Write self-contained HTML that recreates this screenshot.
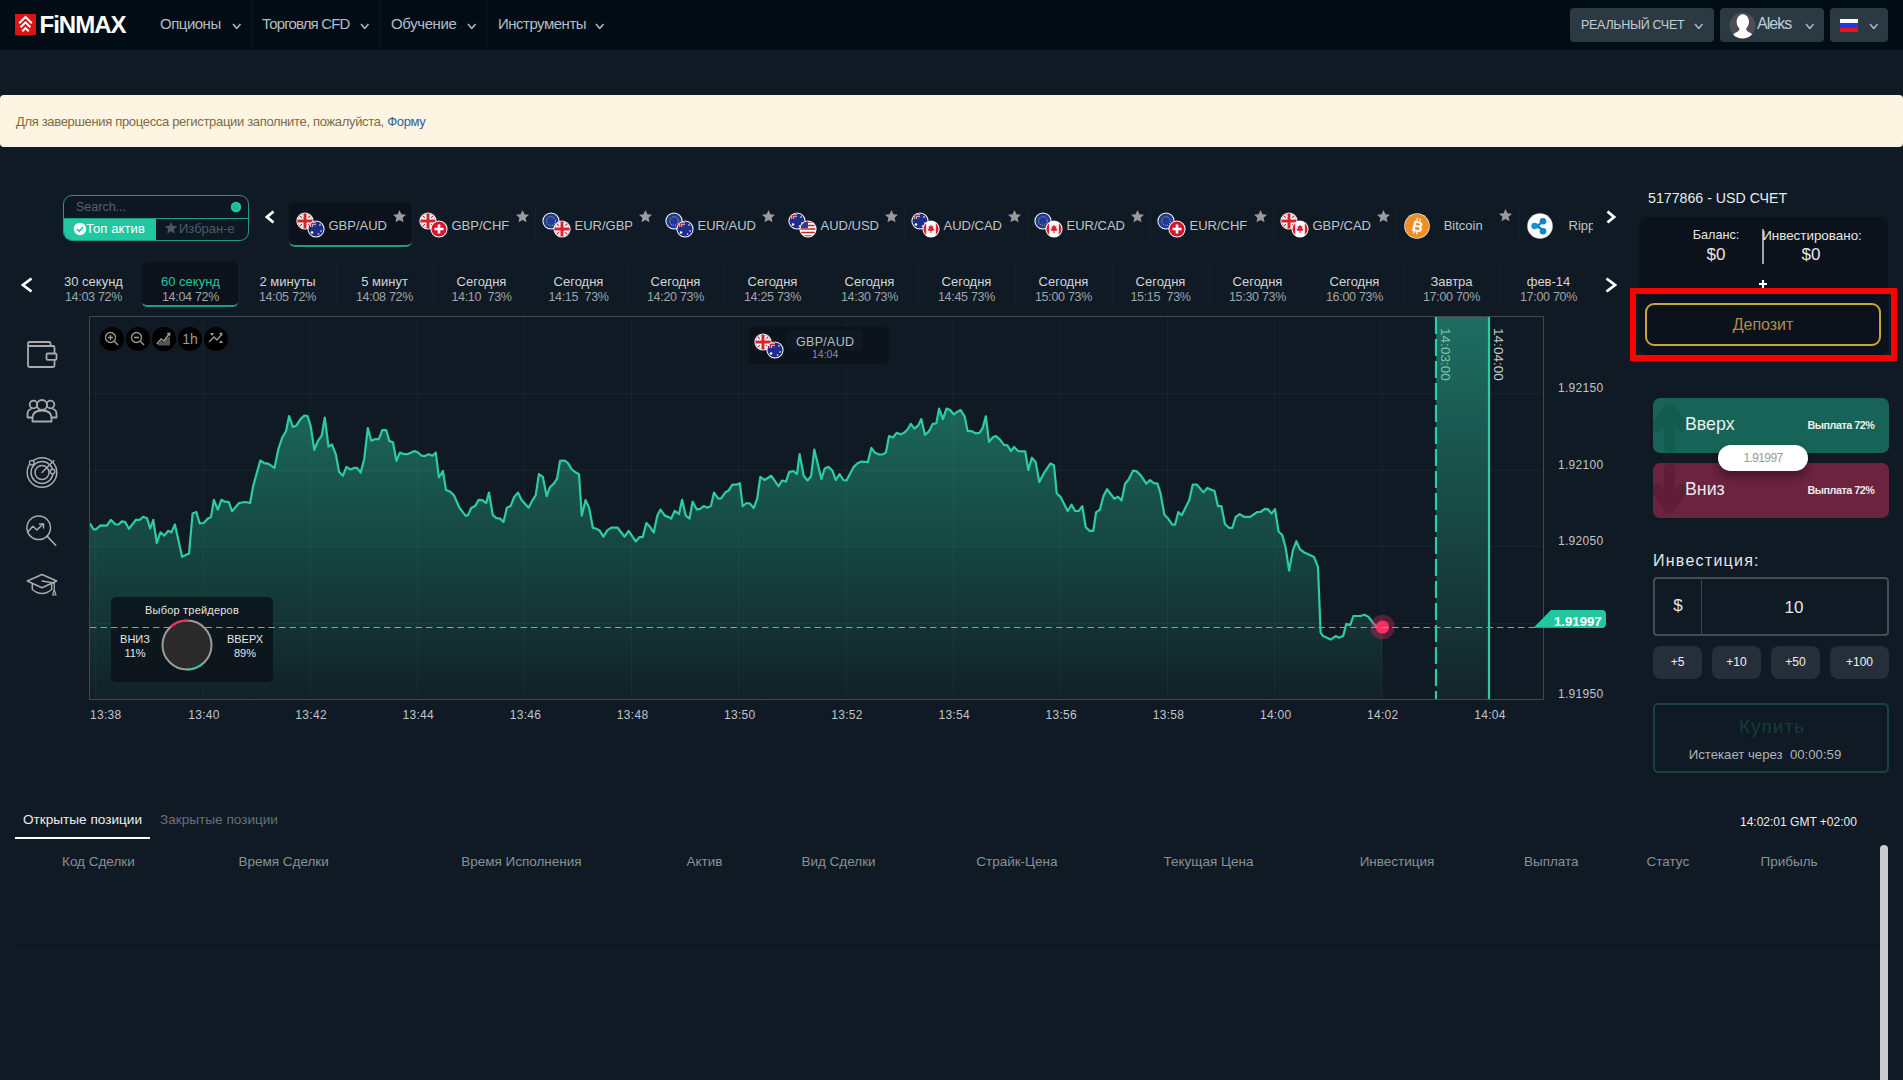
<!DOCTYPE html><html><head><meta charset="utf-8"><style>*{box-sizing:border-box}body{margin:0;width:1903px;height:1080px;background:#0f1a24;overflow:hidden;position:relative;font-family:'Liberation Sans', sans-serif}div{line-height:1.15}</style></head><body><div id="hdr" style="position:absolute;left:0;top:0;width:1903px;height:50px;background:#010c14"></div>
<svg style="position:absolute;left:15px;top:14px" width="21" height="21" viewBox="0 0 21 21"><rect width="21" height="21" fill="#dd1414"/>
<path d="M4.2,9.2 L10.5,3 L16.8,9.2" fill="none" stroke="#fff" stroke-width="2"/>
<path d="M5.6,13.2 L10.5,8.3 L15.4,13.2" fill="none" stroke="#fff" stroke-width="2"/>
<path d="M7.3,17.2 L10.5,14 L13.7,17.2" fill="none" stroke="#fff" stroke-width="2"/></svg>
<div style="position:absolute;left:39.5px;top:11px;font:bold 24px 'Liberation Sans', sans-serif;color:#fff;letter-spacing:-1px">FiNMAX</div>
<div style="position:absolute;left:160px;top:15px;font:15px 'Liberation Sans', sans-serif;color:#b3bec5;white-space:nowrap;letter-spacing:-0.5px">Опционы</div>
<svg style="position:absolute;left:232px;top:22.5px" width="9.5" height="6.5"><path d="M1,1 L4.75,5.5 L8.5,1" fill="none" stroke="#aab4bb" stroke-width="1.6"/></svg>
<div style="position:absolute;left:262px;top:15px;font:15px 'Liberation Sans', sans-serif;color:#b3bec5;white-space:nowrap;letter-spacing:-0.85px">Торговля CFD</div>
<svg style="position:absolute;left:360px;top:22.5px" width="9.5" height="6.5"><path d="M1,1 L4.75,5.5 L8.5,1" fill="none" stroke="#aab4bb" stroke-width="1.6"/></svg>
<div style="position:absolute;left:391px;top:15px;font:15px 'Liberation Sans', sans-serif;color:#b3bec5;white-space:nowrap;letter-spacing:-0.4px">Обучение</div>
<svg style="position:absolute;left:467px;top:22.5px" width="9.5" height="6.5"><path d="M1,1 L4.75,5.5 L8.5,1" fill="none" stroke="#aab4bb" stroke-width="1.6"/></svg>
<div style="position:absolute;left:498px;top:15px;font:15px 'Liberation Sans', sans-serif;color:#b3bec5;white-space:nowrap;letter-spacing:-0.5px">Инструменты</div>
<svg style="position:absolute;left:595px;top:22.5px" width="9.5" height="6.5"><path d="M1,1 L4.75,5.5 L8.5,1" fill="none" stroke="#aab4bb" stroke-width="1.6"/></svg>
<div style="position:absolute;left:252px;top:0;width:1px;height:50px;background:#0d1722"></div>
<div style="position:absolute;left:380px;top:0;width:1px;height:50px;background:#0d1722"></div>
<div style="position:absolute;left:486px;top:0;width:1px;height:50px;background:#0d1722"></div>
<div style="position:absolute;left:1570px;top:8px;width:144px;height:34px;background:#2b3942;border-radius:4px"></div>
<div style="position:absolute;left:1581px;top:18.3px;font:12.5px 'Liberation Sans', sans-serif;color:#c4ccd2;white-space:nowrap;letter-spacing:-0.3px">РЕАЛЬНЫЙ СЧЕТ</div>
<svg style="position:absolute;left:1694px;top:22.5px" width="9.5" height="6.5"><path d="M1,1 L4.75,5.5 L8.5,1" fill="none" stroke="#aab4bb" stroke-width="1.6"/></svg>
<div style="position:absolute;left:1720px;top:8px;width:104px;height:34px;background:#2b3942;border-radius:4px"></div>
<svg style="position:absolute;left:1729px;top:12px" width="27" height="27" viewBox="0 0 27 27"><circle cx="13.5" cy="13.5" r="13" fill="#4f4d52"/>
<clipPath id="avc"><circle cx="13.5" cy="13.5" r="13"/></clipPath><g clip-path="url(#avc)"><ellipse cx="13.8" cy="9.8" rx="6.2" ry="7.6" fill="#fff"/><path d="M10.5,15 Q10.8,19 8,20 Q3,21.5 3.5,27 H24 Q24.5,21.5 19.6,20 Q16.8,19 17.1,15 Z" fill="#fff"/></g></svg>
<div style="position:absolute;left:1757px;top:14.5px;font:16px 'Liberation Sans', sans-serif;color:#c4ccd2;letter-spacing:-1px">Aleks</div>
<svg style="position:absolute;left:1805px;top:22.5px" width="9.5" height="6.5"><path d="M1,1 L4.75,5.5 L8.5,1" fill="none" stroke="#aab4bb" stroke-width="1.6"/></svg>
<div style="position:absolute;left:1830px;top:8px;width:58px;height:34px;background:#2b3942;border-radius:4px"></div>
<div style="position:absolute;left:1840px;top:19px;width:18px;height:13px;background:linear-gradient(#fff 0 33%,#1c3fd6 33% 66%,#e8141b 66%)"></div>
<svg style="position:absolute;left:1869px;top:22.5px" width="9.5" height="6.5"><path d="M1,1 L4.75,5.5 L8.5,1" fill="none" stroke="#aab4bb" stroke-width="1.6"/></svg>
<div style="position:absolute;left:0;top:95px;width:1903px;height:52px;background:#fdf5e2;border-radius:4px"></div>
<div style="position:absolute;left:16px;top:114px;font:13px 'Liberation Sans', sans-serif;color:#7f6a45;white-space:nowrap;letter-spacing:-0.33px">Для завершения процесса регистрации заполните, пожалуйста, <span style="color:#2d5f9a">Форму</span></div>
<svg width="0" height="0" style="position:absolute"><defs>
<clipPath id="cc"><circle cx="0" cy="0" r="7.6"/></clipPath>
</defs></svg>
<div style="position:absolute;left:63px;top:195px;width:186px;height:46px;border:1.5px solid #1f9c84;border-radius:9px;overflow:hidden;background:#0e1822"><div style="position:absolute;left:0;top:21.5px;width:186px;height:1.5px;background:#1f9c84"></div><div style="position:absolute;left:0;top:23px;width:92px;height:22px;background:#21c7a0"></div></div>
<div style="position:absolute;left:76px;top:200px;font:12.5px 'Liberation Sans', sans-serif;color:#56616b">Search...</div>
<svg style="position:absolute;left:230px;top:201px" width="12" height="12" viewBox="-6 -6 12 12"><circle r="5.2" fill="#21c7a0"/><circle cx="-0.6" cy="-0.4" r="2" fill="none" stroke="#12a583" stroke-width="0.9"/><path d="M0.9,1.1 L2.5,2.6" stroke="#12a583" stroke-width="0.9"/></svg>
<svg style="position:absolute;left:73px;top:222px" width="14" height="14"><circle cx="7" cy="7" r="6.2" fill="#fff"/><path d="M4,7.2 L6.2,9.3 L10,5" fill="none" stroke="#21c7a0" stroke-width="1.6"/></svg>
<div style="position:absolute;left:86px;top:221px;font:13px 'Liberation Sans', sans-serif;color:#fff;letter-spacing:0.1px">Топ актив</div>
<svg style="position:absolute;left:164px;top:221px" width="14" height="14" viewBox="0 0 24 24"><path d="M12,1.5 L15.1,8.3 L22.5,9 L16.9,14 L18.5,21.3 L12,17.6 L5.5,21.3 L7.1,14 L1.5,9 L8.9,8.3 Z" fill="#4a5763"/></svg>
<div style="position:absolute;left:179px;top:221px;font:13px 'Liberation Sans', sans-serif;color:#4d5964">Избран-е</div>
<svg style="position:absolute;left:265px;top:210px" width="10" height="14"><path d="M8.5,1.5 L2,7.0 L8.5,12.5" fill="none" stroke="#fff" stroke-width="2.8"/></svg>
<svg style="position:absolute;left:1606px;top:210px" width="10" height="14"><path d="M1.5,1.5 L8,7.0 L1.5,12.5" fill="none" stroke="#fff" stroke-width="2.8"/></svg>
<div style="position:absolute;left:289px;top:202px;width:123px;height:45px;background:#0b121b;border-radius:6px;border-bottom:2px solid #1f9c84"></div>
<svg style="position:absolute;left:296px;top:212px" width="18" height="18" viewBox="-9 -9 18 18"><circle r="8.6" fill="#fff"/><g clip-path="url(#cc)"><rect x="-9" y="-9" width="18" height="18" fill="#2b3f8e"/><path d="M-9,-9 L9,9 M9,-9 L-9,9" stroke="#fff" stroke-width="4.5"/><path d="M-9,-9 L9,9 M9,-9 L-9,9" stroke="#d8222e" stroke-width="1.2"/><path d="M0,-9 V9 M-9,0 H9" stroke="#fff" stroke-width="5.5"/><path d="M0,-9 V9 M-9,0 H9" stroke="#d8222e" stroke-width="3"/></g></svg>
<svg style="position:absolute;left:306.5px;top:220px" width="18" height="18" viewBox="-9 -9 18 18"><circle r="8.6" fill="#fff"/><g clip-path="url(#cc)"><rect x="-9" y="-9" width="18" height="18" fill="#1e2c8a"/><rect x="-9" y="-9" width="9" height="7" fill="#2b3f8e"/><path d="M-4.5,-9 V-2 M-9,-5.5 H0" stroke="#fff" stroke-width="2.4"/><path d="M-4.5,-9 V-2 M-9,-5.5 H0" stroke="#d8222e" stroke-width="1.4"/><circle cx="-4" cy="3.5" r="1.3" fill="#fff"/><circle cx="4" cy="-4" r="0.8" fill="#fff"/><circle cx="5" cy="2" r="0.8" fill="#fff"/><circle cx="2.5" cy="5" r="0.8" fill="#fff"/></g></svg>
<div style="position:absolute;left:328.5px;top:218px;font:13px 'Liberation Sans', sans-serif;color:#bfc4c8">GBP/AUD</div>
<svg style="position:absolute;left:391.5px;top:208.5px" width="15.0" height="15.0" viewBox="0 0 24 24"><path d="M12,1.5 L15.1,8.3 L22.5,9 L16.9,14 L18.5,21.3 L12,17.6 L5.5,21.3 L7.1,14 L1.5,9 L8.9,8.3 Z" fill="#9b9b9b"/></svg>
<div style="position:absolute;left:412px;top:203px;width:1px;height:42px;background:#16202b"></div>
<svg style="position:absolute;left:419px;top:212px" width="18" height="18" viewBox="-9 -9 18 18"><circle r="8.6" fill="#fff"/><g clip-path="url(#cc)"><rect x="-9" y="-9" width="18" height="18" fill="#2b3f8e"/><path d="M-9,-9 L9,9 M9,-9 L-9,9" stroke="#fff" stroke-width="4.5"/><path d="M-9,-9 L9,9 M9,-9 L-9,9" stroke="#d8222e" stroke-width="1.2"/><path d="M0,-9 V9 M-9,0 H9" stroke="#fff" stroke-width="5.5"/><path d="M0,-9 V9 M-9,0 H9" stroke="#d8222e" stroke-width="3"/></g></svg>
<svg style="position:absolute;left:429.5px;top:220px" width="18" height="18" viewBox="-9 -9 18 18"><circle r="8.6" fill="#fff"/><circle r="7.6" fill="#d8142c"/><path d="M0,-4.5 V4.5 M-4.5,0 H4.5" stroke="#fff" stroke-width="2.6"/></svg>
<div style="position:absolute;left:451.5px;top:218px;font:13px 'Liberation Sans', sans-serif;color:#bfc4c8">GBP/CHF</div>
<svg style="position:absolute;left:514.5px;top:208.5px" width="15.0" height="15.0" viewBox="0 0 24 24"><path d="M12,1.5 L15.1,8.3 L22.5,9 L16.9,14 L18.5,21.3 L12,17.6 L5.5,21.3 L7.1,14 L1.5,9 L8.9,8.3 Z" fill="#9b9b9b"/></svg>
<div style="position:absolute;left:535px;top:203px;width:1px;height:42px;background:#16202b"></div>
<svg style="position:absolute;left:542px;top:212px" width="18" height="18" viewBox="-9 -9 18 18"><circle r="8.6" fill="#fff"/><circle r="7.6" fill="#1f3a9a"/><circle r="4.3" fill="none" stroke="#e8c53a" stroke-width="1" stroke-dasharray="1 1.25"/></svg>
<svg style="position:absolute;left:552.5px;top:220px" width="18" height="18" viewBox="-9 -9 18 18"><circle r="8.6" fill="#fff"/><g clip-path="url(#cc)"><rect x="-9" y="-9" width="18" height="18" fill="#2b3f8e"/><path d="M-9,-9 L9,9 M9,-9 L-9,9" stroke="#fff" stroke-width="4.5"/><path d="M-9,-9 L9,9 M9,-9 L-9,9" stroke="#d8222e" stroke-width="1.2"/><path d="M0,-9 V9 M-9,0 H9" stroke="#fff" stroke-width="5.5"/><path d="M0,-9 V9 M-9,0 H9" stroke="#d8222e" stroke-width="3"/></g></svg>
<div style="position:absolute;left:574.5px;top:218px;font:13px 'Liberation Sans', sans-serif;color:#bfc4c8">EUR/GBP</div>
<svg style="position:absolute;left:637.5px;top:208.5px" width="15.0" height="15.0" viewBox="0 0 24 24"><path d="M12,1.5 L15.1,8.3 L22.5,9 L16.9,14 L18.5,21.3 L12,17.6 L5.5,21.3 L7.1,14 L1.5,9 L8.9,8.3 Z" fill="#9b9b9b"/></svg>
<div style="position:absolute;left:658px;top:203px;width:1px;height:42px;background:#16202b"></div>
<svg style="position:absolute;left:665px;top:212px" width="18" height="18" viewBox="-9 -9 18 18"><circle r="8.6" fill="#fff"/><circle r="7.6" fill="#1f3a9a"/><circle r="4.3" fill="none" stroke="#e8c53a" stroke-width="1" stroke-dasharray="1 1.25"/></svg>
<svg style="position:absolute;left:675.5px;top:220px" width="18" height="18" viewBox="-9 -9 18 18"><circle r="8.6" fill="#fff"/><g clip-path="url(#cc)"><rect x="-9" y="-9" width="18" height="18" fill="#1e2c8a"/><rect x="-9" y="-9" width="9" height="7" fill="#2b3f8e"/><path d="M-4.5,-9 V-2 M-9,-5.5 H0" stroke="#fff" stroke-width="2.4"/><path d="M-4.5,-9 V-2 M-9,-5.5 H0" stroke="#d8222e" stroke-width="1.4"/><circle cx="-4" cy="3.5" r="1.3" fill="#fff"/><circle cx="4" cy="-4" r="0.8" fill="#fff"/><circle cx="5" cy="2" r="0.8" fill="#fff"/><circle cx="2.5" cy="5" r="0.8" fill="#fff"/></g></svg>
<div style="position:absolute;left:697.5px;top:218px;font:13px 'Liberation Sans', sans-serif;color:#bfc4c8">EUR/AUD</div>
<svg style="position:absolute;left:760.5px;top:208.5px" width="15.0" height="15.0" viewBox="0 0 24 24"><path d="M12,1.5 L15.1,8.3 L22.5,9 L16.9,14 L18.5,21.3 L12,17.6 L5.5,21.3 L7.1,14 L1.5,9 L8.9,8.3 Z" fill="#9b9b9b"/></svg>
<div style="position:absolute;left:781px;top:203px;width:1px;height:42px;background:#16202b"></div>
<svg style="position:absolute;left:788px;top:212px" width="18" height="18" viewBox="-9 -9 18 18"><circle r="8.6" fill="#fff"/><g clip-path="url(#cc)"><rect x="-9" y="-9" width="18" height="18" fill="#1e2c8a"/><rect x="-9" y="-9" width="9" height="7" fill="#2b3f8e"/><path d="M-4.5,-9 V-2 M-9,-5.5 H0" stroke="#fff" stroke-width="2.4"/><path d="M-4.5,-9 V-2 M-9,-5.5 H0" stroke="#d8222e" stroke-width="1.4"/><circle cx="-4" cy="3.5" r="1.3" fill="#fff"/><circle cx="4" cy="-4" r="0.8" fill="#fff"/><circle cx="5" cy="2" r="0.8" fill="#fff"/><circle cx="2.5" cy="5" r="0.8" fill="#fff"/></g></svg>
<svg style="position:absolute;left:798.5px;top:220px" width="18" height="18" viewBox="-9 -9 18 18"><circle r="8.6" fill="#fff"/><g clip-path="url(#cc)"><rect x="-9" y="-9" width="18" height="18" fill="#fff"/><path d="M-9,-7 H9 M-9,-3.5 H9 M-9,0 H9 M-9,3.5 H9 M-9,7 H9" stroke="#c8202e" stroke-width="1.7"/><rect x="-9" y="-9" width="9" height="8" fill="#2b3a8c"/></g></svg>
<div style="position:absolute;left:820.5px;top:218px;font:13px 'Liberation Sans', sans-serif;color:#bfc4c8">AUD/USD</div>
<svg style="position:absolute;left:883.5px;top:208.5px" width="15.0" height="15.0" viewBox="0 0 24 24"><path d="M12,1.5 L15.1,8.3 L22.5,9 L16.9,14 L18.5,21.3 L12,17.6 L5.5,21.3 L7.1,14 L1.5,9 L8.9,8.3 Z" fill="#9b9b9b"/></svg>
<div style="position:absolute;left:904px;top:203px;width:1px;height:42px;background:#16202b"></div>
<svg style="position:absolute;left:911px;top:212px" width="18" height="18" viewBox="-9 -9 18 18"><circle r="8.6" fill="#fff"/><g clip-path="url(#cc)"><rect x="-9" y="-9" width="18" height="18" fill="#1e2c8a"/><rect x="-9" y="-9" width="9" height="7" fill="#2b3f8e"/><path d="M-4.5,-9 V-2 M-9,-5.5 H0" stroke="#fff" stroke-width="2.4"/><path d="M-4.5,-9 V-2 M-9,-5.5 H0" stroke="#d8222e" stroke-width="1.4"/><circle cx="-4" cy="3.5" r="1.3" fill="#fff"/><circle cx="4" cy="-4" r="0.8" fill="#fff"/><circle cx="5" cy="2" r="0.8" fill="#fff"/><circle cx="2.5" cy="5" r="0.8" fill="#fff"/></g></svg>
<svg style="position:absolute;left:921.5px;top:220px" width="18" height="18" viewBox="-9 -9 18 18"><circle r="8.6" fill="#fff"/><g clip-path="url(#cc)"><rect x="-9" y="-9" width="18" height="18" fill="#fff"/><rect x="-9" y="-9" width="4.2" height="18" fill="#d8222e"/><rect x="4.8" y="-9" width="4.2" height="18" fill="#d8222e"/><path d="M0,-4.5 L1,-2.5 L2.5,-3 L2,0 L3.5,-0.8 L3,1.5 L0.5,2 V4 H-0.5 V2 L-3,1.5 L-3.5,-0.8 L-2,0 L-2.5,-3 L-1,-2.5 Z" fill="#d8222e"/></g></svg>
<div style="position:absolute;left:943.5px;top:218px;font:13px 'Liberation Sans', sans-serif;color:#bfc4c8">AUD/CAD</div>
<svg style="position:absolute;left:1006.5px;top:208.5px" width="15.0" height="15.0" viewBox="0 0 24 24"><path d="M12,1.5 L15.1,8.3 L22.5,9 L16.9,14 L18.5,21.3 L12,17.6 L5.5,21.3 L7.1,14 L1.5,9 L8.9,8.3 Z" fill="#9b9b9b"/></svg>
<div style="position:absolute;left:1027px;top:203px;width:1px;height:42px;background:#16202b"></div>
<svg style="position:absolute;left:1034px;top:212px" width="18" height="18" viewBox="-9 -9 18 18"><circle r="8.6" fill="#fff"/><circle r="7.6" fill="#1f3a9a"/><circle r="4.3" fill="none" stroke="#e8c53a" stroke-width="1" stroke-dasharray="1 1.25"/></svg>
<svg style="position:absolute;left:1044.5px;top:220px" width="18" height="18" viewBox="-9 -9 18 18"><circle r="8.6" fill="#fff"/><g clip-path="url(#cc)"><rect x="-9" y="-9" width="18" height="18" fill="#fff"/><rect x="-9" y="-9" width="4.2" height="18" fill="#d8222e"/><rect x="4.8" y="-9" width="4.2" height="18" fill="#d8222e"/><path d="M0,-4.5 L1,-2.5 L2.5,-3 L2,0 L3.5,-0.8 L3,1.5 L0.5,2 V4 H-0.5 V2 L-3,1.5 L-3.5,-0.8 L-2,0 L-2.5,-3 L-1,-2.5 Z" fill="#d8222e"/></g></svg>
<div style="position:absolute;left:1066.5px;top:218px;font:13px 'Liberation Sans', sans-serif;color:#bfc4c8">EUR/CAD</div>
<svg style="position:absolute;left:1129.5px;top:208.5px" width="15.0" height="15.0" viewBox="0 0 24 24"><path d="M12,1.5 L15.1,8.3 L22.5,9 L16.9,14 L18.5,21.3 L12,17.6 L5.5,21.3 L7.1,14 L1.5,9 L8.9,8.3 Z" fill="#9b9b9b"/></svg>
<div style="position:absolute;left:1150px;top:203px;width:1px;height:42px;background:#16202b"></div>
<svg style="position:absolute;left:1157px;top:212px" width="18" height="18" viewBox="-9 -9 18 18"><circle r="8.6" fill="#fff"/><circle r="7.6" fill="#1f3a9a"/><circle r="4.3" fill="none" stroke="#e8c53a" stroke-width="1" stroke-dasharray="1 1.25"/></svg>
<svg style="position:absolute;left:1167.5px;top:220px" width="18" height="18" viewBox="-9 -9 18 18"><circle r="8.6" fill="#fff"/><circle r="7.6" fill="#d8142c"/><path d="M0,-4.5 V4.5 M-4.5,0 H4.5" stroke="#fff" stroke-width="2.6"/></svg>
<div style="position:absolute;left:1189.5px;top:218px;font:13px 'Liberation Sans', sans-serif;color:#bfc4c8">EUR/CHF</div>
<svg style="position:absolute;left:1252.5px;top:208.5px" width="15.0" height="15.0" viewBox="0 0 24 24"><path d="M12,1.5 L15.1,8.3 L22.5,9 L16.9,14 L18.5,21.3 L12,17.6 L5.5,21.3 L7.1,14 L1.5,9 L8.9,8.3 Z" fill="#9b9b9b"/></svg>
<div style="position:absolute;left:1273px;top:203px;width:1px;height:42px;background:#16202b"></div>
<svg style="position:absolute;left:1280px;top:212px" width="18" height="18" viewBox="-9 -9 18 18"><circle r="8.6" fill="#fff"/><g clip-path="url(#cc)"><rect x="-9" y="-9" width="18" height="18" fill="#2b3f8e"/><path d="M-9,-9 L9,9 M9,-9 L-9,9" stroke="#fff" stroke-width="4.5"/><path d="M-9,-9 L9,9 M9,-9 L-9,9" stroke="#d8222e" stroke-width="1.2"/><path d="M0,-9 V9 M-9,0 H9" stroke="#fff" stroke-width="5.5"/><path d="M0,-9 V9 M-9,0 H9" stroke="#d8222e" stroke-width="3"/></g></svg>
<svg style="position:absolute;left:1290.5px;top:220px" width="18" height="18" viewBox="-9 -9 18 18"><circle r="8.6" fill="#fff"/><g clip-path="url(#cc)"><rect x="-9" y="-9" width="18" height="18" fill="#fff"/><rect x="-9" y="-9" width="4.2" height="18" fill="#d8222e"/><rect x="4.8" y="-9" width="4.2" height="18" fill="#d8222e"/><path d="M0,-4.5 L1,-2.5 L2.5,-3 L2,0 L3.5,-0.8 L3,1.5 L0.5,2 V4 H-0.5 V2 L-3,1.5 L-3.5,-0.8 L-2,0 L-2.5,-3 L-1,-2.5 Z" fill="#d8222e"/></g></svg>
<div style="position:absolute;left:1312.5px;top:218px;font:13px 'Liberation Sans', sans-serif;color:#bfc4c8">GBP/CAD</div>
<svg style="position:absolute;left:1375.5px;top:208.5px" width="15.0" height="15.0" viewBox="0 0 24 24"><path d="M12,1.5 L15.1,8.3 L22.5,9 L16.9,14 L18.5,21.3 L12,17.6 L5.5,21.3 L7.1,14 L1.5,9 L8.9,8.3 Z" fill="#9b9b9b"/></svg>
<div style="position:absolute;left:1396px;top:203px;width:1px;height:42px;background:#16202b"></div>
<svg style="position:absolute;left:1404px;top:213px" width="26" height="26" viewBox="0 0 26 26"><circle cx="13" cy="13" r="12.8" fill="#e8e8e8"/><circle cx="13" cy="13" r="12" fill="#ef8f22"/><g transform="rotate(14 13 13)"><text x="13.8" y="18.6" text-anchor="middle" font-family="Liberation Sans" font-weight="bold" font-size="15" fill="#fff">B</text><path d="M11.5,5 V8 M14.5,5 V8 M11.5,18 V21 M14.5,18 V21" stroke="#fff" stroke-width="1.3"/></g></svg>
<div style="position:absolute;left:1443.7px;top:218px;font:13px 'Liberation Sans', sans-serif;color:#bfc4c8">Bitcoin</div>
<svg style="position:absolute;left:1498.0px;top:208.0px" width="15.0" height="15.0" viewBox="0 0 24 24"><path d="M12,1.5 L15.1,8.3 L22.5,9 L16.9,14 L18.5,21.3 L12,17.6 L5.5,21.3 L7.1,14 L1.5,9 L8.9,8.3 Z" fill="#9b9b9b"/></svg>
<div style="position:absolute;left:1519px;top:203px;width:1px;height:42px;background:#16202b"></div>
<svg style="position:absolute;left:1527px;top:213px" width="26" height="26" viewBox="0 0 26 26"><circle cx="13" cy="13" r="12.8" fill="#d8dde0"/><circle cx="13" cy="13" r="12" fill="#fff"/><path d="M7.6,13 Q12,13 16,8 M7.6,13 Q12,13 16,18" fill="none" stroke="#1683c8" stroke-width="2.4"/><circle cx="7.6" cy="13" r="3.3" fill="#1a8fd6"/><circle cx="16" cy="8.2" r="3.3" fill="#1683c8"/><circle cx="16" cy="18.2" r="3.3" fill="#1683c8"/></svg>
<div style="position:absolute;left:1568.5px;top:218px;width:24px;overflow:hidden;font:13px 'Liberation Sans', sans-serif;color:#bfc4c8">Ripple</div>
<svg style="position:absolute;left:21px;top:277px" width="12" height="16"><path d="M10.5,1.5 L2,8.0 L10.5,14.5" fill="none" stroke="#fff" stroke-width="2.8"/></svg>
<svg style="position:absolute;left:1605px;top:277px" width="12" height="16"><path d="M1.5,1.5 L10,8.0 L1.5,14.5" fill="none" stroke="#fff" stroke-width="2.8"/></svg>
<div style="position:absolute;left:142px;top:262px;width:96px;height:45px;background:#0b121b;border-radius:5px;border-bottom:2px solid #1f9c84"></div>
<div style="position:absolute;left:45px;top:274px;width:97px;text-align:center;font:13px 'Liberation Sans', sans-serif;color:#d2d5d8;white-space:nowrap">30 секунд</div>
<div style="position:absolute;left:45px;top:290px;width:97px;text-align:center;font:12.5px 'Liberation Sans', sans-serif;color:#9fa4a9;white-space:pre;letter-spacing:-0.3px">14:03 72%</div>
<div style="position:absolute;left:142px;top:274px;width:97px;text-align:center;font:13px 'Liberation Sans', sans-serif;color:#21c7a0;white-space:nowrap">60 секунд</div>
<div style="position:absolute;left:142px;top:290px;width:97px;text-align:center;font:12.5px 'Liberation Sans', sans-serif;color:#9fa4a9;white-space:pre;letter-spacing:-0.3px">14:04 72%</div>
<div style="position:absolute;left:239px;top:263px;width:1px;height:42px;background:#16202b"></div>
<div style="position:absolute;left:239px;top:274px;width:97px;text-align:center;font:13px 'Liberation Sans', sans-serif;color:#d2d5d8;white-space:nowrap">2 минуты</div>
<div style="position:absolute;left:239px;top:290px;width:97px;text-align:center;font:12.5px 'Liberation Sans', sans-serif;color:#9fa4a9;white-space:pre;letter-spacing:-0.3px">14:05 72%</div>
<div style="position:absolute;left:336px;top:263px;width:1px;height:42px;background:#16202b"></div>
<div style="position:absolute;left:336px;top:274px;width:97px;text-align:center;font:13px 'Liberation Sans', sans-serif;color:#d2d5d8;white-space:nowrap">5 минут</div>
<div style="position:absolute;left:336px;top:290px;width:97px;text-align:center;font:12.5px 'Liberation Sans', sans-serif;color:#9fa4a9;white-space:pre;letter-spacing:-0.3px">14:08 72%</div>
<div style="position:absolute;left:433px;top:263px;width:1px;height:42px;background:#16202b"></div>
<div style="position:absolute;left:433px;top:274px;width:97px;text-align:center;font:13px 'Liberation Sans', sans-serif;color:#d2d5d8;white-space:nowrap">Сегодня</div>
<div style="position:absolute;left:433px;top:290px;width:97px;text-align:center;font:12.5px 'Liberation Sans', sans-serif;color:#9fa4a9;white-space:pre;letter-spacing:-0.3px">14:10  73%</div>
<div style="position:absolute;left:530px;top:263px;width:1px;height:42px;background:#16202b"></div>
<div style="position:absolute;left:530px;top:274px;width:97px;text-align:center;font:13px 'Liberation Sans', sans-serif;color:#d2d5d8;white-space:nowrap">Сегодня</div>
<div style="position:absolute;left:530px;top:290px;width:97px;text-align:center;font:12.5px 'Liberation Sans', sans-serif;color:#9fa4a9;white-space:pre;letter-spacing:-0.3px">14:15  73%</div>
<div style="position:absolute;left:627px;top:263px;width:1px;height:42px;background:#16202b"></div>
<div style="position:absolute;left:627px;top:274px;width:97px;text-align:center;font:13px 'Liberation Sans', sans-serif;color:#d2d5d8;white-space:nowrap">Сегодня</div>
<div style="position:absolute;left:627px;top:290px;width:97px;text-align:center;font:12.5px 'Liberation Sans', sans-serif;color:#9fa4a9;white-space:pre;letter-spacing:-0.3px">14:20 73%</div>
<div style="position:absolute;left:724px;top:263px;width:1px;height:42px;background:#16202b"></div>
<div style="position:absolute;left:724px;top:274px;width:97px;text-align:center;font:13px 'Liberation Sans', sans-serif;color:#d2d5d8;white-space:nowrap">Сегодня</div>
<div style="position:absolute;left:724px;top:290px;width:97px;text-align:center;font:12.5px 'Liberation Sans', sans-serif;color:#9fa4a9;white-space:pre;letter-spacing:-0.3px">14:25 73%</div>
<div style="position:absolute;left:821px;top:263px;width:1px;height:42px;background:#16202b"></div>
<div style="position:absolute;left:821px;top:274px;width:97px;text-align:center;font:13px 'Liberation Sans', sans-serif;color:#d2d5d8;white-space:nowrap">Сегодня</div>
<div style="position:absolute;left:821px;top:290px;width:97px;text-align:center;font:12.5px 'Liberation Sans', sans-serif;color:#9fa4a9;white-space:pre;letter-spacing:-0.3px">14:30 73%</div>
<div style="position:absolute;left:918px;top:263px;width:1px;height:42px;background:#16202b"></div>
<div style="position:absolute;left:918px;top:274px;width:97px;text-align:center;font:13px 'Liberation Sans', sans-serif;color:#d2d5d8;white-space:nowrap">Сегодня</div>
<div style="position:absolute;left:918px;top:290px;width:97px;text-align:center;font:12.5px 'Liberation Sans', sans-serif;color:#9fa4a9;white-space:pre;letter-spacing:-0.3px">14:45 73%</div>
<div style="position:absolute;left:1015px;top:263px;width:1px;height:42px;background:#16202b"></div>
<div style="position:absolute;left:1015px;top:274px;width:97px;text-align:center;font:13px 'Liberation Sans', sans-serif;color:#d2d5d8;white-space:nowrap">Сегодня</div>
<div style="position:absolute;left:1015px;top:290px;width:97px;text-align:center;font:12.5px 'Liberation Sans', sans-serif;color:#9fa4a9;white-space:pre;letter-spacing:-0.3px">15:00 73%</div>
<div style="position:absolute;left:1112px;top:263px;width:1px;height:42px;background:#16202b"></div>
<div style="position:absolute;left:1112px;top:274px;width:97px;text-align:center;font:13px 'Liberation Sans', sans-serif;color:#d2d5d8;white-space:nowrap">Сегодня</div>
<div style="position:absolute;left:1112px;top:290px;width:97px;text-align:center;font:12.5px 'Liberation Sans', sans-serif;color:#9fa4a9;white-space:pre;letter-spacing:-0.3px">15:15  73%</div>
<div style="position:absolute;left:1209px;top:263px;width:1px;height:42px;background:#16202b"></div>
<div style="position:absolute;left:1209px;top:274px;width:97px;text-align:center;font:13px 'Liberation Sans', sans-serif;color:#d2d5d8;white-space:nowrap">Сегодня</div>
<div style="position:absolute;left:1209px;top:290px;width:97px;text-align:center;font:12.5px 'Liberation Sans', sans-serif;color:#9fa4a9;white-space:pre;letter-spacing:-0.3px">15:30 73%</div>
<div style="position:absolute;left:1306px;top:263px;width:1px;height:42px;background:#16202b"></div>
<div style="position:absolute;left:1306px;top:274px;width:97px;text-align:center;font:13px 'Liberation Sans', sans-serif;color:#d2d5d8;white-space:nowrap">Сегодня</div>
<div style="position:absolute;left:1306px;top:290px;width:97px;text-align:center;font:12.5px 'Liberation Sans', sans-serif;color:#9fa4a9;white-space:pre;letter-spacing:-0.3px">16:00 73%</div>
<div style="position:absolute;left:1403px;top:263px;width:1px;height:42px;background:#16202b"></div>
<div style="position:absolute;left:1403px;top:274px;width:97px;text-align:center;font:13px 'Liberation Sans', sans-serif;color:#d2d5d8;white-space:nowrap">Завтра</div>
<div style="position:absolute;left:1403px;top:290px;width:97px;text-align:center;font:12.5px 'Liberation Sans', sans-serif;color:#9fa4a9;white-space:pre;letter-spacing:-0.3px">17:00 70%</div>
<div style="position:absolute;left:1500px;top:263px;width:1px;height:42px;background:#16202b"></div>
<div style="position:absolute;left:1500px;top:274px;width:97px;text-align:center;font:13px 'Liberation Sans', sans-serif;color:#d2d5d8;white-space:nowrap">фев-14</div>
<div style="position:absolute;left:1500px;top:290px;width:97px;text-align:center;font:12.5px 'Liberation Sans', sans-serif;color:#9fa4a9;white-space:pre;letter-spacing:-0.3px">17:00 70%</div>
<svg style="position:absolute;left:0;top:0" width="1903" height="1080" viewBox="0 0 1903 1080">
<defs>
<linearGradient id="ag" gradientUnits="userSpaceOnUse" x1="0" y1="410" x2="0" y2="700"><stop offset="0" stop-color="#1b6659"/><stop offset="0.5" stop-color="#15443f"/><stop offset="1" stop-color="#122028"/></linearGradient>
<linearGradient id="bg2" gradientUnits="userSpaceOnUse" x1="0" y1="317" x2="0" y2="699"><stop offset="0" stop-color="#1d6e60"/><stop offset="1" stop-color="#13252b"/></linearGradient>
</defs>
<path d="M89.9,523.4 L93.5,529.3 L95.9,529.3 L100.6,525.3 L106.9,525.6 L110.8,519.8 L115.5,524.5 L118.7,524.5 L121.8,521.4 L125.0,521.9 L128.9,528.8 L136.0,519.8 L139.9,519.8 L143.1,516.7 L147.0,518.2 L150.2,528.5 L153.3,519.8 L156.8,543.0 L160.4,532.4 L164.3,535.6 L168.3,530.8 L171.4,532.4 L174.9,524.5 L182.1,556.8 L189.0,553.6 L192.6,513.5 L196.3,512.0 L199.7,523.4 L203.7,523.0 L207.6,518.7 L211.0,517.1 L213.9,499.8 L217.8,509.6 L221.4,499.8 L224.9,501.7 L228.8,502.0 L232.0,511.2 L239.1,503.0 L245.4,502.0 L250.1,503.0 L253.2,486.0 L260.3,460.5 L264.2,463.2 L268.2,463.6 L274.5,467.9 L278.4,449.0 L282.4,437.2 L286.0,431.2 L289.1,416.0 L292.9,427.0 L296.5,425.4 L300.5,419.1 L304.4,415.5 L307.5,416.0 L310.7,426.2 L314.3,449.8 L317.8,441.1 L321.7,435.6 L324.8,417.5 L328.5,446.6 L331.9,444.3 L335.9,454.5 L339.0,471.8 L342.9,475.8 L346.4,466.8 L350.5,469.5 L354.0,467.9 L357.1,467.9 L360.6,472.6 L364.2,459.2 L367.8,428.1 L371.3,440.7 L375.2,439.1 L378.8,439.1 L382.3,430.1 L386.2,430.1 L389.4,441.1 L393.0,442.2 L396.4,460.8 L399.9,452.6 L404.3,454.2 L407.5,454.2 L414.5,451.1 L417.7,452.2 L421.6,455.8 L425.6,455.8 L428.7,454.2 L432.3,455.8 L435.8,452.6 L438.9,477.3 L442.9,471.0 L446.0,489.9 L449.9,491.5 L453.9,495.1 L459.4,507.7 L465.7,515.9 L468.0,515.1 L471.2,508.0 L475.1,506.1 L478.6,499.8 L482.2,500.1 L486.2,503.0 L489.0,492.6 L492.8,515.1 L496.4,518.2 L500.3,518.7 L503.5,521.9 L506.9,507.7 L510.6,506.1 L514.2,497.0 L518.0,492.6 L521.6,500.1 L528.6,507.7 L532.6,500.1 L535.7,495.4 L538.9,474.2 L542.8,476.9 L546.7,496.2 L549.9,487.2 L553.8,483.6 L557.0,478.9 L560.1,460.8 L564.8,460.5 L568.0,463.2 L571.9,469.5 L575.9,472.6 L579.0,474.2 L581.8,515.6 L585.6,500.1 L589.2,508.0 L592.8,527.7 L596.3,528.8 L599.5,530.4 L603.4,536.7 L607.3,530.4 L611.3,527.7 L617.6,527.7 L624.6,536.7 L628.6,530.8 L635.7,541.4 L639.6,537.1 L642.7,537.1 L646.4,523.0 L649.8,526.6 L653.7,532.4 L657.4,515.6 L660.5,509.6 L664.8,515.6 L668.7,517.1 L671.1,518.7 L674.7,510.8 L679.0,514.0 L682.1,499.8 L685.7,515.6 L689.5,518.7 L692.6,501.7 L696.7,509.3 L700.2,508.8 L703.7,506.1 L707.3,507.7 L710.9,506.1 L714.0,492.6 L718.3,498.6 L721.0,498.3 L725.4,492.3 L728.5,490.7 L732.4,484.7 L736.4,484.7 L739.8,483.2 L742.7,506.1 L746.6,503.0 L749.8,503.6 L753.7,508.0 L757.2,498.6 L760.3,476.9 L764.7,480.0 L771.3,475.8 L778.6,486.3 L782.0,480.5 L786.0,481.6 L789.1,472.1 L793.3,471.0 L797.0,474.2 L799.6,454.2 L803.7,475.8 L807.5,480.5 L811.1,476.2 L814.3,449.5 L821.4,478.9 L824.8,468.4 L828.4,466.8 L832.4,470.6 L835.8,480.0 L839.5,474.2 L843.4,480.0 L846.5,480.5 L853.6,467.1 L857.5,463.2 L861.5,461.6 L867.8,462.1 L871.4,447.9 L874.9,452.6 L878.8,454.5 L882.4,454.5 L885.9,452.6 L889.0,436.0 L893.0,437.5 L896.6,432.8 L900.8,434.4 L904.8,432.2 L907.9,429.0 L910.8,423.8 L914.5,428.6 L918.2,425.4 L921.3,419.1 L924.9,434.8 L928.7,431.7 L932.8,423.8 L936.3,423.4 L939.1,408.6 L942.9,419.1 L946.5,408.6 L950.1,410.1 L953.9,414.4 L957.5,411.7 L960.6,410.1 L964.6,416.4 L967.7,431.2 L971.7,431.2 L975.6,433.3 L979.5,432.8 L982.7,427.8 L985.8,416.4 L989.0,441.9 L992.9,437.2 L996.0,436.0 L1000.0,439.6 L1003.9,444.8 L1007.4,445.4 L1011.0,451.1 L1014.1,447.0 L1018.1,451.1 L1025.2,451.4 L1028.3,469.9 L1031.9,457.7 L1035.7,462.1 L1039.3,482.1 L1043.3,474.2 L1050.3,463.6 L1054.0,465.3 L1056.7,493.2 L1060.6,497.1 L1067.7,511.0 L1071.6,504.7 L1075.1,511.0 L1078.7,511.0 L1082.3,506.2 L1085.8,527.3 L1089.7,530.9 L1093.3,530.9 L1096.0,512.5 L1099.9,509.7 L1103.4,496.3 L1107.0,489.2 L1114.4,498.7 L1118.0,496.8 L1121.6,500.6 L1125.1,483.7 L1128.6,479.5 L1133.0,470.7 L1136.4,471.1 L1140.8,475.4 L1146.3,483.7 L1150.0,480.1 L1154.2,483.3 L1157.4,483.3 L1160.5,493.2 L1164.4,514.7 L1167.9,518.3 L1172.3,524.6 L1175.1,524.6 L1178.3,512.1 L1181.8,515.2 L1189.3,499.9 L1192.8,484.5 L1196.7,484.5 L1203.5,492.4 L1207.2,488.0 L1214.5,491.1 L1218.0,506.2 L1221.4,506.2 L1225.0,524.2 L1229.0,527.8 L1232.4,527.8 L1235.6,517.2 L1239.7,514.1 L1243.9,516.8 L1250.2,516.8 L1257.3,512.0 L1260.5,512.0 L1264.9,508.9 L1268.0,509.2 L1271.5,513.6 L1275.0,509.2 L1278.6,531.7 L1282.2,534.9 L1285.7,548.0 L1289.1,570.6 L1292.8,550.6 L1296.4,541.2 L1299.8,549.1 L1303.8,552.2 L1314.0,556.9 L1318.0,567.2 L1320.6,632.5 L1322.7,635.7 L1330.6,639.6 L1335.7,636.1 L1339.2,637.7 L1343.1,636.1 L1346.3,623.9 L1350.2,625.1 L1353.4,616.0 L1360.5,616.0 L1364.4,614.7 L1368.3,616.8 L1375.4,625.7 L1382.5,627.0 L1382.5,699 L89.9,699 Z" fill="url(#ag)"/>
<g stroke="#ffffff" stroke-opacity="0.042" stroke-width="1" fill="none"><path d="M95.8,317 V699" /><path d="M203.0,317 V699" /><path d="M310.1,317 V699" /><path d="M417.3,317 V699" /><path d="M524.5,317 V699" /><path d="M631.6,317 V699" /><path d="M738.8,317 V699" /><path d="M846.0,317 V699" /><path d="M953.2,317 V699" /><path d="M1060.3,317 V699" /><path d="M1167.5,317 V699" /><path d="M1274.7,317 V699" /><path d="M1381.8,317 V699" /><path d="M1489.0,317 V699" /><path d="M90,393.5 H1543" /><path d="M90,470.5 H1543" /><path d="M90,546.5 H1543" /><path d="M90,623.5 H1543" /></g>
<rect x="1436" y="317" width="53" height="382" fill="url(#bg2)"/>
<path d="M89.9,523.4 L93.5,529.3 L95.9,529.3 L100.6,525.3 L106.9,525.6 L110.8,519.8 L115.5,524.5 L118.7,524.5 L121.8,521.4 L125.0,521.9 L128.9,528.8 L136.0,519.8 L139.9,519.8 L143.1,516.7 L147.0,518.2 L150.2,528.5 L153.3,519.8 L156.8,543.0 L160.4,532.4 L164.3,535.6 L168.3,530.8 L171.4,532.4 L174.9,524.5 L182.1,556.8 L189.0,553.6 L192.6,513.5 L196.3,512.0 L199.7,523.4 L203.7,523.0 L207.6,518.7 L211.0,517.1 L213.9,499.8 L217.8,509.6 L221.4,499.8 L224.9,501.7 L228.8,502.0 L232.0,511.2 L239.1,503.0 L245.4,502.0 L250.1,503.0 L253.2,486.0 L260.3,460.5 L264.2,463.2 L268.2,463.6 L274.5,467.9 L278.4,449.0 L282.4,437.2 L286.0,431.2 L289.1,416.0 L292.9,427.0 L296.5,425.4 L300.5,419.1 L304.4,415.5 L307.5,416.0 L310.7,426.2 L314.3,449.8 L317.8,441.1 L321.7,435.6 L324.8,417.5 L328.5,446.6 L331.9,444.3 L335.9,454.5 L339.0,471.8 L342.9,475.8 L346.4,466.8 L350.5,469.5 L354.0,467.9 L357.1,467.9 L360.6,472.6 L364.2,459.2 L367.8,428.1 L371.3,440.7 L375.2,439.1 L378.8,439.1 L382.3,430.1 L386.2,430.1 L389.4,441.1 L393.0,442.2 L396.4,460.8 L399.9,452.6 L404.3,454.2 L407.5,454.2 L414.5,451.1 L417.7,452.2 L421.6,455.8 L425.6,455.8 L428.7,454.2 L432.3,455.8 L435.8,452.6 L438.9,477.3 L442.9,471.0 L446.0,489.9 L449.9,491.5 L453.9,495.1 L459.4,507.7 L465.7,515.9 L468.0,515.1 L471.2,508.0 L475.1,506.1 L478.6,499.8 L482.2,500.1 L486.2,503.0 L489.0,492.6 L492.8,515.1 L496.4,518.2 L500.3,518.7 L503.5,521.9 L506.9,507.7 L510.6,506.1 L514.2,497.0 L518.0,492.6 L521.6,500.1 L528.6,507.7 L532.6,500.1 L535.7,495.4 L538.9,474.2 L542.8,476.9 L546.7,496.2 L549.9,487.2 L553.8,483.6 L557.0,478.9 L560.1,460.8 L564.8,460.5 L568.0,463.2 L571.9,469.5 L575.9,472.6 L579.0,474.2 L581.8,515.6 L585.6,500.1 L589.2,508.0 L592.8,527.7 L596.3,528.8 L599.5,530.4 L603.4,536.7 L607.3,530.4 L611.3,527.7 L617.6,527.7 L624.6,536.7 L628.6,530.8 L635.7,541.4 L639.6,537.1 L642.7,537.1 L646.4,523.0 L649.8,526.6 L653.7,532.4 L657.4,515.6 L660.5,509.6 L664.8,515.6 L668.7,517.1 L671.1,518.7 L674.7,510.8 L679.0,514.0 L682.1,499.8 L685.7,515.6 L689.5,518.7 L692.6,501.7 L696.7,509.3 L700.2,508.8 L703.7,506.1 L707.3,507.7 L710.9,506.1 L714.0,492.6 L718.3,498.6 L721.0,498.3 L725.4,492.3 L728.5,490.7 L732.4,484.7 L736.4,484.7 L739.8,483.2 L742.7,506.1 L746.6,503.0 L749.8,503.6 L753.7,508.0 L757.2,498.6 L760.3,476.9 L764.7,480.0 L771.3,475.8 L778.6,486.3 L782.0,480.5 L786.0,481.6 L789.1,472.1 L793.3,471.0 L797.0,474.2 L799.6,454.2 L803.7,475.8 L807.5,480.5 L811.1,476.2 L814.3,449.5 L821.4,478.9 L824.8,468.4 L828.4,466.8 L832.4,470.6 L835.8,480.0 L839.5,474.2 L843.4,480.0 L846.5,480.5 L853.6,467.1 L857.5,463.2 L861.5,461.6 L867.8,462.1 L871.4,447.9 L874.9,452.6 L878.8,454.5 L882.4,454.5 L885.9,452.6 L889.0,436.0 L893.0,437.5 L896.6,432.8 L900.8,434.4 L904.8,432.2 L907.9,429.0 L910.8,423.8 L914.5,428.6 L918.2,425.4 L921.3,419.1 L924.9,434.8 L928.7,431.7 L932.8,423.8 L936.3,423.4 L939.1,408.6 L942.9,419.1 L946.5,408.6 L950.1,410.1 L953.9,414.4 L957.5,411.7 L960.6,410.1 L964.6,416.4 L967.7,431.2 L971.7,431.2 L975.6,433.3 L979.5,432.8 L982.7,427.8 L985.8,416.4 L989.0,441.9 L992.9,437.2 L996.0,436.0 L1000.0,439.6 L1003.9,444.8 L1007.4,445.4 L1011.0,451.1 L1014.1,447.0 L1018.1,451.1 L1025.2,451.4 L1028.3,469.9 L1031.9,457.7 L1035.7,462.1 L1039.3,482.1 L1043.3,474.2 L1050.3,463.6 L1054.0,465.3 L1056.7,493.2 L1060.6,497.1 L1067.7,511.0 L1071.6,504.7 L1075.1,511.0 L1078.7,511.0 L1082.3,506.2 L1085.8,527.3 L1089.7,530.9 L1093.3,530.9 L1096.0,512.5 L1099.9,509.7 L1103.4,496.3 L1107.0,489.2 L1114.4,498.7 L1118.0,496.8 L1121.6,500.6 L1125.1,483.7 L1128.6,479.5 L1133.0,470.7 L1136.4,471.1 L1140.8,475.4 L1146.3,483.7 L1150.0,480.1 L1154.2,483.3 L1157.4,483.3 L1160.5,493.2 L1164.4,514.7 L1167.9,518.3 L1172.3,524.6 L1175.1,524.6 L1178.3,512.1 L1181.8,515.2 L1189.3,499.9 L1192.8,484.5 L1196.7,484.5 L1203.5,492.4 L1207.2,488.0 L1214.5,491.1 L1218.0,506.2 L1221.4,506.2 L1225.0,524.2 L1229.0,527.8 L1232.4,527.8 L1235.6,517.2 L1239.7,514.1 L1243.9,516.8 L1250.2,516.8 L1257.3,512.0 L1260.5,512.0 L1264.9,508.9 L1268.0,509.2 L1271.5,513.6 L1275.0,509.2 L1278.6,531.7 L1282.2,534.9 L1285.7,548.0 L1289.1,570.6 L1292.8,550.6 L1296.4,541.2 L1299.8,549.1 L1303.8,552.2 L1314.0,556.9 L1318.0,567.2 L1320.6,632.5 L1322.7,635.7 L1330.6,639.6 L1335.7,636.1 L1339.2,637.7 L1343.1,636.1 L1346.3,623.9 L1350.2,625.1 L1353.4,616.0 L1360.5,616.0 L1364.4,614.7 L1368.3,616.8 L1375.4,625.7 L1382.5,627.0" fill="none" stroke="#2ecca3" stroke-width="2.2" stroke-linejoin="round"/>
<rect x="89.5" y="316.5" width="1454" height="383" fill="none" stroke="#47464a" stroke-width="1"/>
<path d="M1436,317 V699" stroke="#2ecca3" stroke-width="2.2" stroke-dasharray="17 5"/>
<path d="M1489,317 V699" stroke="#2ecca3" stroke-width="2.2"/>
<path d="M1533.5,627.8 L1551,610 H1602 Q1606,610 1606,614 V624 Q1606,628 1602,628 Z" fill="#21c7a0"/>
<circle cx="1382.5" cy="627" r="12.3" fill="#e0295c" fill-opacity="0.35"/>
<circle cx="1382.5" cy="627" r="6.6" fill="#ff2e63"/>
</svg>
<div style="position:absolute;left:1554px;top:613.5px;font:bold 13.2px 'Liberation Sans', sans-serif;color:#fff">1.91997</div>
<div style="position:absolute;left:1558px;top:381px;font:12px 'Liberation Sans', sans-serif;color:#c0c4c8;letter-spacing:0.3px">1.92150</div>
<div style="position:absolute;left:1558px;top:458px;font:12px 'Liberation Sans', sans-serif;color:#c0c4c8;letter-spacing:0.3px">1.92100</div>
<div style="position:absolute;left:1558px;top:534px;font:12px 'Liberation Sans', sans-serif;color:#c0c4c8;letter-spacing:0.3px">1.92050</div>
<div style="position:absolute;left:1558px;top:687px;font:12px 'Liberation Sans', sans-serif;color:#c0c4c8;letter-spacing:0.3px">1.91950</div>
<div style="position:absolute;left:90px;top:708px;font:12px 'Liberation Sans', sans-serif;color:#c0c4c8;letter-spacing:0.3px">13:38</div>
<div style="position:absolute;left:184.0px;top:708px;width:40px;text-align:center;font:12px 'Liberation Sans', sans-serif;color:#c0c4c8;letter-spacing:0.3px">13:40</div>
<div style="position:absolute;left:291.1px;top:708px;width:40px;text-align:center;font:12px 'Liberation Sans', sans-serif;color:#c0c4c8;letter-spacing:0.3px">13:42</div>
<div style="position:absolute;left:398.3px;top:708px;width:40px;text-align:center;font:12px 'Liberation Sans', sans-serif;color:#c0c4c8;letter-spacing:0.3px">13:44</div>
<div style="position:absolute;left:505.5px;top:708px;width:40px;text-align:center;font:12px 'Liberation Sans', sans-serif;color:#c0c4c8;letter-spacing:0.3px">13:46</div>
<div style="position:absolute;left:612.6px;top:708px;width:40px;text-align:center;font:12px 'Liberation Sans', sans-serif;color:#c0c4c8;letter-spacing:0.3px">13:48</div>
<div style="position:absolute;left:719.8px;top:708px;width:40px;text-align:center;font:12px 'Liberation Sans', sans-serif;color:#c0c4c8;letter-spacing:0.3px">13:50</div>
<div style="position:absolute;left:827.0px;top:708px;width:40px;text-align:center;font:12px 'Liberation Sans', sans-serif;color:#c0c4c8;letter-spacing:0.3px">13:52</div>
<div style="position:absolute;left:934.2px;top:708px;width:40px;text-align:center;font:12px 'Liberation Sans', sans-serif;color:#c0c4c8;letter-spacing:0.3px">13:54</div>
<div style="position:absolute;left:1041.3px;top:708px;width:40px;text-align:center;font:12px 'Liberation Sans', sans-serif;color:#c0c4c8;letter-spacing:0.3px">13:56</div>
<div style="position:absolute;left:1148.5px;top:708px;width:40px;text-align:center;font:12px 'Liberation Sans', sans-serif;color:#c0c4c8;letter-spacing:0.3px">13:58</div>
<div style="position:absolute;left:1255.7px;top:708px;width:40px;text-align:center;font:12px 'Liberation Sans', sans-serif;color:#c0c4c8;letter-spacing:0.3px">14:00</div>
<div style="position:absolute;left:1362.8px;top:708px;width:40px;text-align:center;font:12px 'Liberation Sans', sans-serif;color:#c0c4c8;letter-spacing:0.3px">14:02</div>
<div style="position:absolute;left:1470.0px;top:708px;width:40px;text-align:center;font:12px 'Liberation Sans', sans-serif;color:#c0c4c8;letter-spacing:0.3px">14:04</div>
<div style="position:absolute;left:1445px;top:328px;transform-origin:0 0;transform:rotate(90deg) translate(0,-8.3px);font:13.6px 'Liberation Sans', sans-serif;color:#7cc2b0;white-space:nowrap">14:03:00</div>
<div style="position:absolute;left:1498px;top:328px;transform-origin:0 0;transform:rotate(90deg) translate(0,-8.3px);font:13.6px 'Liberation Sans', sans-serif;color:#c8c8c8;white-space:nowrap">14:04:00</div>
<svg style="position:absolute;left:100px;top:327px" width="24" height="24" viewBox="-12 -12 24 24"><circle r="12" fill="#000"/><circle cx="-1.5" cy="-1.5" r="5" fill="none" stroke="#9a9a9a" stroke-width="1.3"/><path d="M2,2 L6,6" stroke="#9a9a9a" stroke-width="1.5"/><path d="M-1.5,-4 V1 M-4,-1.5 H1" stroke="#9a9a9a" stroke-width="1.3"/></svg>
<svg style="position:absolute;left:126px;top:327px" width="24" height="24" viewBox="-12 -12 24 24"><circle r="12" fill="#000"/><circle cx="-1.5" cy="-1.5" r="5" fill="none" stroke="#9a9a9a" stroke-width="1.3"/><path d="M2,2 L6,6" stroke="#9a9a9a" stroke-width="1.5"/><path d="M-4,-1.5 H1" stroke="#9a9a9a" stroke-width="1.6"/></svg>
<svg style="position:absolute;left:152px;top:327px" width="24" height="24" viewBox="-12 -12 24 24"><circle r="12" fill="#000"/><path d="M-7,5 L-3,0 L0,2 L5,-5" fill="none" stroke="#9a9a9a" stroke-width="1.4"/><path d="M2.5,-6 L6.5,-6.5 L6,-2.5 Z" fill="#9a9a9a"/><path d="M-5,6.5 V4 M-3,6.5 V2 M-1,6.5 V3 M1,6.5 V1 M3,6.5 V-1 M5,6.5 V-2" stroke="#9a9a9a" stroke-width="1.1"/></svg>
<svg style="position:absolute;left:178px;top:327px" width="24" height="24" viewBox="-12 -12 24 24"><circle r="12" fill="#000"/><text x="0" y="5" text-anchor="middle" font-family="Liberation Sans" font-size="14" fill="#9a9a9a">1h</text></svg>
<svg style="position:absolute;left:204px;top:327px" width="24" height="24" viewBox="-12 -12 24 24"><circle r="12" fill="#000"/><path d="M-7,3 L-2,-2 L1,1 L6,-5" fill="none" stroke="#9a9a9a" stroke-width="1.4"/><path d="M3,-6 L6.5,-6.5 L6,-3 Z" fill="#9a9a9a"/><path d="M-6,-6 L-2,-6 L-4,-3 Z M3,4 L7,4 L5,1 Z" fill="#9a9a9a"/></svg>
<div style="position:absolute;left:749px;top:327px;width:140px;height:37px;background:#0c131b;border-radius:5px"></div>
<div style="position:absolute;left:787px;top:330px;width:75px;height:20px;background:#0f1923"></div>
<svg style="position:absolute;left:754px;top:333px" width="18" height="18" viewBox="-9 -9 18 18"><circle r="8.6" fill="#fff"/><g clip-path="url(#cc)"><rect x="-9" y="-9" width="18" height="18" fill="#2b3f8e"/><path d="M-9,-9 L9,9 M9,-9 L-9,9" stroke="#fff" stroke-width="4.5"/><path d="M-9,-9 L9,9 M9,-9 L-9,9" stroke="#d8222e" stroke-width="1.2"/><path d="M0,-9 V9 M-9,0 H9" stroke="#fff" stroke-width="5.5"/><path d="M0,-9 V9 M-9,0 H9" stroke="#d8222e" stroke-width="3"/></g></svg>
<svg style="position:absolute;left:766px;top:341px" width="18" height="18" viewBox="-9 -9 18 18"><circle r="8.6" fill="#fff"/><g clip-path="url(#cc)"><rect x="-9" y="-9" width="18" height="18" fill="#1e2c8a"/><rect x="-9" y="-9" width="9" height="7" fill="#2b3f8e"/><path d="M-4.5,-9 V-2 M-9,-5.5 H0" stroke="#fff" stroke-width="2.4"/><path d="M-4.5,-9 V-2 M-9,-5.5 H0" stroke="#d8222e" stroke-width="1.4"/><circle cx="-4" cy="3.5" r="1.3" fill="#fff"/><circle cx="4" cy="-4" r="0.8" fill="#fff"/><circle cx="5" cy="2" r="0.8" fill="#fff"/><circle cx="2.5" cy="5" r="0.8" fill="#fff"/></g></svg>
<div style="position:absolute;left:796px;top:334.5px;font:12.5px 'Liberation Sans', sans-serif;color:#b8bdc2;letter-spacing:0.3px">GBP/AUD</div>
<div style="position:absolute;left:812px;top:348px;font:10.5px 'Liberation Sans', sans-serif;color:#8c9298">14:04</div>
<div style="position:absolute;left:111px;top:597px;width:162px;height:85px;background:rgba(10,17,23,0.78);border-radius:5px"></div>
<div style="position:absolute;left:111px;top:603.5px;width:162px;text-align:center;font:11px 'Liberation Sans', sans-serif;color:#e4e4e4;letter-spacing:0.2px">Выбор трейдеров</div>
<svg style="position:absolute;left:0;top:620px" width="1540" height="14"><path d="M90,7.5 H1535" stroke="#2ecca3" stroke-width="1.2" stroke-dasharray="6.5 4"/></svg>
<svg style="position:absolute;left:161px;top:619px" width="52" height="52" viewBox="-26 -26 52 52"><circle r="24.5" fill="#2a2a2a" stroke="#9b9b9b" stroke-width="2"/>
<path d="M-16.5,-18.1 A24.5,24.5 0 0 1 1.5,-24.45" fill="none" stroke="#ee2a5a" stroke-width="2.2"/>
<path d="M0,24.5 A24.5,24.5 0 0 0 15.4,19" fill="none" stroke="#2ec4a0" stroke-width="2.2"/></svg>
<div style="position:absolute;left:118px;top:632px;width:34px;text-align:center;font:11px 'Liberation Sans', sans-serif;color:#e4e4e4;line-height:14px">ВНИЗ<br>11%</div>
<div style="position:absolute;left:226px;top:632px;width:38px;text-align:center;font:11px 'Liberation Sans', sans-serif;color:#e4e4e4;line-height:14px">ВВЕРХ<br>89%</div>
<svg style="position:absolute;left:0;top:330px" width="80" height="280" viewBox="0 330 80 280" fill="none" stroke="#a9abae" stroke-width="1.8" stroke-linejoin="round" stroke-linecap="round">
<path d="M28,346 V343.5 Q28,342 29.5,342 H49 Q50.5,342 50.5,343.5 V346"/>
<rect x="28" y="346" width="26.5" height="21" rx="1.5"/>
<rect x="46.5" y="353.5" width="10" height="6.3" rx="1.3" fill="#0f1a24"/>
<circle cx="33.5" cy="404.5" r="3.8"/>
<circle cx="50.5" cy="404.5" r="3.8"/>
<path d="M31,409 Q27.5,410 27.5,414 V417.5 H32.5"/>
<path d="M53,409 Q56.5,410 56.5,414 V417.5 H51.5"/>
<circle cx="42" cy="405" r="5" fill="#0f1a24"/>
<path d="M32.5,421.5 V418 Q32.5,410.5 42,410.5 Q51.5,410.5 51.5,418 V421.5 Z" fill="#0f1a24"/>
<circle cx="42" cy="472.5" r="14.8" stroke-width="1.5"/>
<circle cx="42" cy="472.5" r="11" stroke-width="1.5"/>
<circle cx="42" cy="472.5" r="7" stroke-width="1.5"/>
<path d="M42,472.5 L53.8,460.7" stroke-width="1.5"/>
<circle cx="31.8" cy="462.7" r="2.3" fill="#0f1a24" stroke-width="1.4"/>
<circle cx="52.6" cy="471.5" r="2.3" fill="#0f1a24" stroke-width="1.4"/>
<circle cx="38.7" cy="527.8" r="11.8" stroke-width="1.5"/>
<path d="M47.3,536.4 L55.7,545.3" stroke-width="1.6"/>
<path d="M28.3,531.5 L32.8,526.3 L36.9,530 L43.3,523.8" stroke-width="1.5"/>
<path d="M39.5,524 H43.5 V528" stroke-width="1.5"/>
<path d="M27.3,581 L42,574.5 L56.7,581 L42,587.8 Z" stroke-width="1.5"/>
<path d="M32.3,584 V589.5 Q42,597.5 51.7,589.5 V584" stroke-width="1.5"/>
<path d="M42,581 L54.3,583 V591" stroke-width="1.3"/>
<path d="M52.6,595 L54.3,590 L56,595 Z" stroke-width="1.2"/>
</svg>
<div style="position:absolute;left:1648px;top:190px;font:14.2px 'Liberation Sans', sans-serif;color:#ececec;white-space:nowrap">5177866 - USD СЧЕТ</div>
<div style="position:absolute;left:1639px;top:217px;width:249px;height:138px;background:#0b121b;border-radius:9px"></div>
<div style="position:absolute;left:1666px;top:228px;width:100px;text-align:center;font:12.7px 'Liberation Sans', sans-serif;color:#e6e6e6">Баланс:</div>
<div style="position:absolute;left:1666px;top:245px;width:100px;text-align:center;font:17px 'Liberation Sans', sans-serif;color:#e6e6e6">$0</div>
<div style="position:absolute;left:1762px;top:229px;width:2px;height:35px;background:#a0a4a8"></div>
<div style="position:absolute;left:1762px;top:228px;width:100px;text-align:center;font:13.4px 'Liberation Sans', sans-serif;color:#e6e6e6;white-space:nowrap">Инвестировано:</div>
<div style="position:absolute;left:1761px;top:245px;width:100px;text-align:center;font:17px 'Liberation Sans', sans-serif;color:#e6e6e6">$0</div>
<svg style="position:absolute;left:1758px;top:279px" width="10" height="10"><path d="M5,1 V9 M1,5 H9" stroke="#fff" stroke-width="2.2"/></svg>
<div style="position:absolute;left:1645px;top:303px;width:236px;height:43px;border:2px solid #c8a73a;border-radius:9px"></div>
<div style="position:absolute;left:1645px;top:315.5px;width:236px;text-align:center;font:16px 'Liberation Sans', sans-serif;color:#b18e4a">Депозит</div>
<div style="position:absolute;left:1630px;top:288px;width:267px;height:73px;border:6px solid #ff0000"></div>
<div style="position:absolute;left:1653px;top:398px;width:236px;height:55px;background:#176357;border-radius:7px;overflow:hidden"><svg style="position:absolute;left:0;top:0" width="40" height="55"><path d="M16.5,49 V12 M4,28 L16.5,10 L29,28" fill="none" stroke="#115448" stroke-width="11" stroke-linecap="round" stroke-linejoin="round" opacity="0.5"/></svg></div>
<div style="position:absolute;left:1653px;top:463px;width:236px;height:55px;background:#6b2340;border-radius:7px;overflow:hidden"><svg style="position:absolute;left:0;top:0" width="40" height="55"><path d="M16.5,6 V43 M4,27 L16.5,45 L29,27" fill="none" stroke="#571a33" stroke-width="11" stroke-linecap="round" stroke-linejoin="round" opacity="0.55"/></svg></div>
<div style="position:absolute;left:1685px;top:413.5px;font:17.8px 'Liberation Sans', sans-serif;color:#e6f0ec">Вверх</div>
<div style="position:absolute;left:1685px;top:478.5px;font:17.8px 'Liberation Sans', sans-serif;color:#f0e6ea">Вниз</div>
<div style="position:absolute;left:1807.5px;top:419px;font:bold 10.8px 'Liberation Sans', sans-serif;color:#e6f0ec;letter-spacing:-0.5px">Выплата 72%</div>
<div style="position:absolute;left:1807.5px;top:484px;font:bold 10.8px 'Liberation Sans', sans-serif;color:#f0e6ea;letter-spacing:-0.5px">Выплата 72%</div>
<div style="position:absolute;left:1718px;top:445px;width:90px;height:26px;background:#fff;border-radius:13px;box-shadow:0 6px 10px rgba(0,0,0,0.35)"></div>
<div style="position:absolute;left:1718px;top:451px;width:90px;text-align:center;font:12px 'Liberation Sans', sans-serif;color:#9a9a9a;letter-spacing:-0.6px">1.91997</div>
<div style="position:absolute;left:1653px;top:552px;font:16px 'Liberation Sans', sans-serif;color:#e6e6e6;letter-spacing:1.25px">Инвестиция:</div>
<div style="position:absolute;left:1653px;top:577px;width:236px;height:59px;border:2px solid #464c53;border-radius:4px"></div>
<div style="position:absolute;left:1701px;top:579px;width:1px;height:55px;background:#3e444b"></div>
<div style="position:absolute;left:1655px;top:596px;width:46px;text-align:center;font:17px 'Liberation Sans', sans-serif;color:#e6e6e6">$</div>
<div style="position:absolute;left:1701px;top:597.5px;width:186px;text-align:center;font:17px 'Liberation Sans', sans-serif;color:#e6e6e6">10</div>
<div style="position:absolute;left:1653px;top:646px;width:49px;height:33px;background:#252f3a;border-radius:8px;text-align:center;font:12px 'Liberation Sans', sans-serif;color:#f0f0f0;line-height:33px">+5</div>
<div style="position:absolute;left:1712px;top:646px;width:49px;height:33px;background:#252f3a;border-radius:8px;text-align:center;font:12px 'Liberation Sans', sans-serif;color:#f0f0f0;line-height:33px">+10</div>
<div style="position:absolute;left:1771px;top:646px;width:49px;height:33px;background:#252f3a;border-radius:8px;text-align:center;font:12px 'Liberation Sans', sans-serif;color:#f0f0f0;line-height:33px">+50</div>
<div style="position:absolute;left:1830px;top:646px;width:59px;height:33px;background:#252f3a;border-radius:8px;text-align:center;font:12px 'Liberation Sans', sans-serif;color:#f0f0f0;line-height:33px">+100</div>
<div style="position:absolute;left:1653px;top:703px;width:236px;height:70px;border:2px solid #17433f;border-radius:5px"></div>
<div style="position:absolute;left:1654px;top:716px;width:236px;text-align:center;font:19px 'Liberation Sans', sans-serif;color:#163a38;letter-spacing:1px">Купить</div>
<div style="position:absolute;left:1647px;top:746.5px;width:236px;text-align:center;font:13.2px 'Liberation Sans', sans-serif;color:#b0b4b8;white-space:pre;letter-spacing:0px">Истекает через  00:00:59</div>
<div style="position:absolute;left:23px;top:811.5px;font:13.6px 'Liberation Sans', sans-serif;color:#ececec;white-space:nowrap">Открытые позиции</div>
<div style="position:absolute;left:15px;top:836.5px;width:135px;height:2.5px;background:#fff"></div>
<div style="position:absolute;left:160px;top:811.5px;font:13.6px 'Liberation Sans', sans-serif;color:#6a7078;white-space:nowrap">Закрытые позиции</div>
<div style="position:absolute;left:1740px;top:814.5px;font:12px 'Liberation Sans', sans-serif;color:#ececec;white-space:nowrap">14:02:01 GMT +02:00</div>
<div style="position:absolute;left:18.4px;top:854px;width:160px;text-align:center;font:13.5px 'Liberation Sans', sans-serif;color:#8a9096;white-space:nowrap">Код Сделки</div>
<div style="position:absolute;left:203.6px;top:854px;width:160px;text-align:center;font:13.5px 'Liberation Sans', sans-serif;color:#8a9096;white-space:nowrap">Время Сделки</div>
<div style="position:absolute;left:441.4px;top:854px;width:160px;text-align:center;font:13.5px 'Liberation Sans', sans-serif;color:#8a9096;white-space:nowrap">Время Исполнения</div>
<div style="position:absolute;left:624.5px;top:854px;width:160px;text-align:center;font:13.5px 'Liberation Sans', sans-serif;color:#8a9096;white-space:nowrap">Актив</div>
<div style="position:absolute;left:758.5px;top:854px;width:160px;text-align:center;font:13.5px 'Liberation Sans', sans-serif;color:#8a9096;white-space:nowrap">Вид Сделки</div>
<div style="position:absolute;left:936.9px;top:854px;width:160px;text-align:center;font:13.5px 'Liberation Sans', sans-serif;color:#8a9096;white-space:nowrap">Страйк-Цена</div>
<div style="position:absolute;left:1128.5px;top:854px;width:160px;text-align:center;font:13.5px 'Liberation Sans', sans-serif;color:#8a9096;white-space:nowrap">Текущая Цена</div>
<div style="position:absolute;left:1317.0px;top:854px;width:160px;text-align:center;font:13.5px 'Liberation Sans', sans-serif;color:#8a9096;white-space:nowrap">Инвестиция</div>
<div style="position:absolute;left:1471.3px;top:854px;width:160px;text-align:center;font:13.5px 'Liberation Sans', sans-serif;color:#8a9096;white-space:nowrap">Выплата</div>
<div style="position:absolute;left:1587.8px;top:854px;width:160px;text-align:center;font:13.5px 'Liberation Sans', sans-serif;color:#8a9096;white-space:nowrap">Статус</div>
<div style="position:absolute;left:1709.0px;top:854px;width:160px;text-align:center;font:13.5px 'Liberation Sans', sans-serif;color:#8a9096;white-space:nowrap">Прибыль</div>
<div style="position:absolute;left:15px;top:945px;width:1865px;height:1px;background:#0a1119"></div>
<div style="position:absolute;left:1880px;top:845px;width:8px;height:240px;background:#c9cbce;border-radius:4px"></div></body></html>
